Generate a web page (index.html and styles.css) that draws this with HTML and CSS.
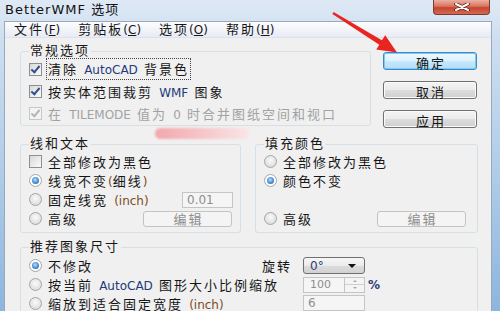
FILE: index.html
```html
<!DOCTYPE html>
<html lang="zh-CN">

<head>
    <meta charset="UTF-8">
    <meta name="viewport" content="width=device-width, initial-scale=1.0">
    <title>BetterWMF 选项</title>
    <link rel="stylesheet" href="styles.css">
</head>

<body>
    <div class="window">
        <div class="titlebar">
            <span class="title">BetterWMF 选项</span>
            <span class="close">
                <svg width="16" height="8" viewBox="0 0 16 8">
                    <path d="M2 1 L14 7 M14 1 L2 7" stroke="#4a1c16" stroke-width="3.6" stroke-linecap="round" />
                    <path d="M2 1 L14 7 M14 1 L2 7" stroke="#ffffff" stroke-width="2" stroke-linecap="round" />
                </svg>
            </span>
        </div>

        <div class="client">
            <!-- Menu -->
            <div class="menubar">
                <span class="menu">文件<span class="lat">(<u>F</u>)</span></span>
                <span class="menu">剪贴板<span class="lat">(<u>C</u>)</span></span>
                <span class="menu">选项<span class="lat">(<u>O</u>)</span></span>
                <span class="menu">帮助<span class="lat">(<u>H</u>)</span></span>
            </div>

            <div class="content">
                <div class="top">
                    <fieldset class="group general">
                        <legend>常规选项</legend>
                        <div class="row">
                            <span class="chk on"></span>
                            <span class="focus">清除 <span class="lat blue">AutoCAD</span> 背景色</span>
                        </div>
                        <div class="row">
                            <span class="chk on"></span>
                            <span>按实体范围裁剪 <span class="lat blue">WMF</span> 图象</span>
                        </div>
                        <div class="row disabled">
                            <span class="chk on off"></span>
                            <span>在 <span class="lat">TILEMODE</span> 值为 <span class="lat">0</span> 时合并图纸空间和视口</span>
                        </div>
                    </fieldset>

                    <div class="buttons">
                        <button class="btn default">确定</button>
                        <button class="btn">取消</button>
                        <button class="btn">应用</button>
                    </div>
                </div>

                <div class="middle">
                    <fieldset class="group">
                        <legend>线和文本</legend>
                        <div class="row">
                            <span class="chk"></span>
                            <span>全部修改为黑色</span>
                        </div>
                        <div class="row">
                            <span class="radio on"></span>
                            <span>线宽不变<span class="lat brown">(</span>细线<span class="lat brown">)</span></span>
                        </div>
                        <div class="row">
                            <span class="radio"></span>
                            <span>固定线宽 <span class="lat brown">(inch)</span></span>
                            <span class="field width">0.01</span>
                        </div>
                        <div class="row">
                            <span class="radio"></span>
                            <span>高级</span>
                            <span class="btn-off">编辑</span>
                        </div>
                    </fieldset>

                    <fieldset class="group fill">
                        <legend>填充颜色</legend>
                        <div class="row">
                            <span class="radio"></span>
                            <span>全部修改为黑色</span>
                        </div>
                        <div class="row">
                            <span class="radio on"></span>
                            <span>颜色不变</span>
                        </div>
                        <div class="row"></div>
                        <div class="row">
                            <span class="radio"></span>
                            <span>高级</span>
                            <span class="btn-off">编辑</span>
                        </div>
                    </fieldset>
                </div>

                <fieldset class="group size">
                    <legend>推荐图象尺寸</legend>
                    <div class="srow">
                        <div class="opt">
                            <span class="radio on"></span>
                            <span>不修改</span>
                            <span class="cap">旋转</span>
                        </div>
                        <div class="combo"><span class="lat navy">0°</span><span class="caret"></span></div>
                    </div>
                    <div class="srow">
                        <div class="opt">
                            <span class="radio"></span>
                            <span>按当前 <span class="lat blue">AutoCAD</span> 图形大小比例缩放</span>
                        </div>
                        <div class="spin">
                            <span class="field">100</span>
                            <span class="arrows">
                                <span class="up"></span>
                                <span class="down"></span>
                            </span>
                        </div>
                        <span class="percent">%</span>
                    </div>
                    <div class="srow">
                        <div class="opt">
                            <span class="radio"></span>
                            <span>缩放到适合固定宽度 <span class="lat brown">(inch)</span></span>
                        </div>
                        <span class="field last">6</span>
                    </div>
                </fieldset>
            </div>
        </div>

        <!-- marcas encima de la captura -->
        <div class="blob"></div>
        <svg class="arrow" width="500" height="311" viewBox="0 0 500 311">
            <polygon points="333.6,11.9 381.9,40.2 385.2,35.2 397,52.5 376.2,49.6 379.3,44.8 332.4,14.1" fill="#e8261f" />
        </svg>
    </div>
</body>

</html>
```

FILE: styles.css
```css
* {
    box-sizing: border-box;
    margin: 0;
    padding: 0;
}

body {
    width: 500px;
    height: 311px;
    overflow: hidden;
    font-family: "DejaVu Sans", "Noto Sans CJK SC", sans-serif;
    font-size: 13px;
    letter-spacing: 2px;
    color: #161616;
}

.window {
    position: relative;
    width: 500px;
    height: 311px;
    overflow: hidden;
    display: flex;
    flex-direction: column;
    background: linear-gradient(to bottom, #dfe9f5 0, #cddef0 40px, #aecbe8 180px, #8db5dd 311px);
}

/* Barra de titulo */
.titlebar {
    height: 21px;
    flex: none;
    display: flex;
    align-items: flex-start;
    padding-left: 5px;
}

.title {
    font-size: 13px;
    line-height: 20px;
    letter-spacing: 1px;
    color: #111;
}

.close {
    margin-left: auto;
    margin-right: 10px;
    width: 57px;
    height: 15px;
    display: flex;
    align-items: center;
    justify-content: center;
    border: 1px solid #7a3a30;
    border-top: none;
    border-radius: 0 0 4px 4px;
    background: linear-gradient(to bottom, #eab0a3 0%, #d9735f 45%, #c8442c 55%, #d56a52 100%);
}

/* Area cliente */
.client {
    flex: 1;
    margin: 0 8px 0 4px;
    border: 1px solid #98a9bb;
    border-bottom: none;
    background-color: #f0f0f0;
    display: flex;
    flex-direction: column;
}

.menubar {
    height: 16px;
    flex: none;
    display: flex;
    align-items: center;
    border-bottom: 1px solid #dde1ea;
    background: linear-gradient(to bottom, #fdfdfe, #e8ebf5);
}

.menu {
    padding: 0 9px;
    line-height: 15px;
}

.lat {
    font-size: 12px;
    letter-spacing: 0;
}

.blue {
    color: #24397a;
}

.brown {
    color: #7c4b1c;
}

.navy {
    color: #2b3c7a;
}

.content {
    padding: 6px 13px 0 15px;
}

.top {
    display: flex;
    align-items: flex-start;
    gap: 12px;
}

.group {
    border: 1px solid #d5dfe5;
    border-radius: 3px;
    padding: 1px 7px 4px 8px;
    min-width: 0;
}

.group legend {
    padding: 0 1px;
    line-height: 14px;
}

.general {
    flex: 1;
    padding: 0 7px 1px 8px;
}

.row {
    display: flex;
    align-items: center;
    height: 19px;
    white-space: nowrap;
}

.general .row {
    height: 22px;
}

.disabled {
    color: #a2a2a2;
}

.focus {
    outline: 1px dotted #444;
    outline-offset: 0;
    padding: 0 1px 1px 1px;
    margin-left: -1px;
}

/* Casillas */
.chk {
    width: 13px;
    height: 13px;
    flex: none;
    margin-right: 6px;
    border: 1px solid #8f8f8f;
    background: linear-gradient(135deg, #d8d8d8, #fbfbfb);
    display: flex;
    align-items: center;
    justify-content: center;
}

.chk.on::after {
    content: "";
    width: 3px;
    height: 7px;
    margin-top: -2px;
    border: solid #2f4f95;
    border-width: 0 2px 2px 0;
    transform: rotate(40deg);
}

.chk.off {
    border-color: #c7c7c7;
    background: #f4f4f4;
}

.chk.off::after {
    border-color: #b5b5b5;
}

.radio {
    width: 13px;
    height: 13px;
    flex: none;
    margin-right: 6px;
    border: 1px solid #a5a5a5;
    border-radius: 50%;
    background: radial-gradient(circle at 50% 40%, #fafafa, #d4d4d4);
    display: flex;
    align-items: center;
    justify-content: center;
}

.radio.on {
    background: #ffffff;
}

.radio.on::after {
    content: "";
    width: 7px;
    height: 7px;
    border-radius: 50%;
    background: radial-gradient(circle at 45% 40%, #b8e0fb, #3d86d2 60%, #1f5aa6);
}

/* Botones */
.buttons {
    width: 94px;
    margin: 8px 1px 0 0;
    display: flex;
    flex-direction: column;
    gap: 11px;
}

.btn {
    height: 18px;
    font-family: inherit;
    font-size: 13px;
    letter-spacing: 2px;
    padding-left: 2px;
    color: #161616;
    border: 1px solid #707070;
    border-radius: 3px;
    background: linear-gradient(to bottom, #f4f4f4 0%, #ebebeb 50%, #dddddd 51%, #cfcfcf 100%);
    box-shadow: inset 0 0 0 1px #fbfbfb;
}

.btn.default {
    border-color: #3c8ac8;
    background: linear-gradient(to bottom, #eef8fe 0%, #ddf1fc 50%, #c6e8fb 51%, #b2ddf6 100%);
    box-shadow: inset 0 0 0 1px #7fcaf2;
}

.btn-off {
    margin-left: auto;
    margin-right: 1px;
    width: 89px;
    height: 16px;
    display: flex;
    align-items: center;
    justify-content: center;
    padding-left: 2px;
    color: #8e8e8e;
    border: 1px solid #c3c3c3;
    border-radius: 3px;
    background-color: #f4f4f4;
}

.fill .btn-off {
    margin-right: 4px;
}

.field {
    height: 16px;
    display: flex;
    align-items: center;
    padding-left: 4px;
    font-size: 12px;
    letter-spacing: 0;
    color: #8e8e8e;
    border: 1px solid #c5c5c5;
    background-color: #f5f5f5;
}

.field.width {
    margin-left: auto;
    width: 51px;
}

.field.last {
    align-self: start;
    margin-top: 1px;
}

.middle {
    display: grid;
    grid-template-columns: 221px 1fr;
    gap: 14px;
    margin-top: 9px;
}

/* Tamano de imagen */
.size {
    margin-top: 7px;
    padding: 2px 7px 4px 8px;
}

.srow {
    display: grid;
    grid-template-columns: 1fr 62px 105px;
    align-items: center;
    height: 19px;
    white-space: nowrap;
}

.opt {
    display: flex;
    align-items: center;
}

.cap {
    margin-left: auto;
    margin-right: 11px;
}

.combo {
    height: 17px;
    display: flex;
    align-items: center;
    padding-left: 6px;
    border: 1px solid #707070;
    border-radius: 3px;
    background: linear-gradient(to bottom, #f6f6f6 0%, #ebebeb 50%, #dcdcdc 51%, #d2d2d2 100%);
}

.caret {
    margin-left: auto;
    margin-right: 8px;
    border-left: 4px solid transparent;
    border-right: 4px solid transparent;
    border-top: 4px solid #111;
}

.spin {
    display: flex;
    height: 16px;
}

.spin .field {
    flex: 1;
    padding-left: 6px;
    font-size: 11px;
}

.arrows {
    width: 20px;
    display: flex;
    flex-direction: column;
    border: 1px solid #c5c5c5;
    border-left: none;
    background-color: #f4f4f4;
}

.arrows span {
    flex: 1;
    display: flex;
    align-items: center;
    justify-content: center;
}

.arrows .up {
    border-bottom: 1px solid #d0d0d0;
}

.arrows .up::after {
    content: "";
    border-left: 2px solid transparent;
    border-right: 2px solid transparent;
    border-bottom: 2px solid #a8a8a8;
}

.arrows .down::after {
    content: "";
    border-left: 2px solid transparent;
    border-right: 2px solid transparent;
    border-top: 2px solid #a8a8a8;
}

.percent {
    padding-left: 3px;
    font-size: 12px;
    letter-spacing: 0;
    font-weight: bold;
    color: #2a3a70;
}

/* marcas sobre la imagen */
.blob {
    position: absolute;
    left: 155px;
    top: 128px;
    width: 95px;
    height: 11px;
    border-radius: 6px;
    background: linear-gradient(to right, #f3a8ad, #f5bcc0 35%, #f8d3d5 70%, #fbe6e7);
    filter: blur(1px);
}

.arrow {
    position: absolute;
    left: 0;
    top: 0;
    pointer-events: none;
}
```
